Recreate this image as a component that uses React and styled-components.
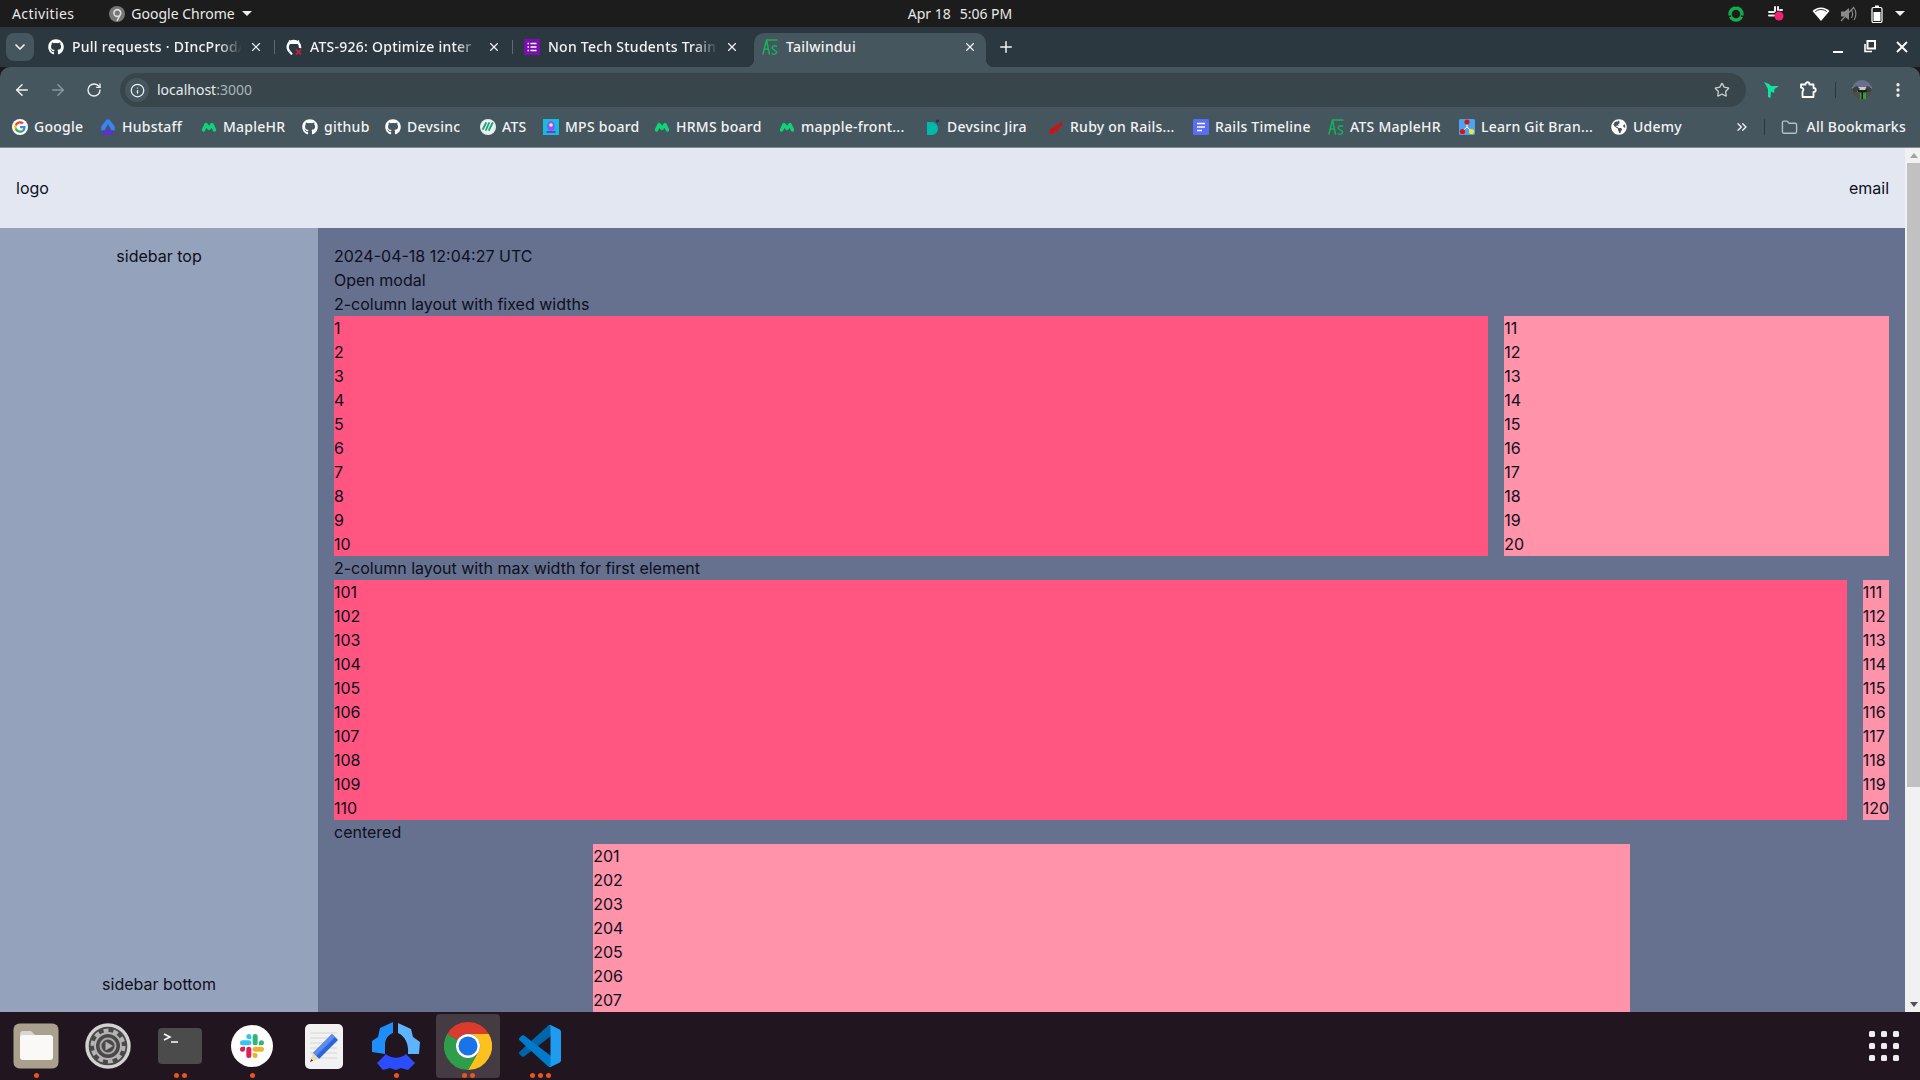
import React from "react";
import styled, { createGlobalStyle } from "styled-components";
import { FaGithub, FaGlobeAmericas } from "react-icons/fa";
import { ArrowLeft, ArrowRight, RotateCw, Info, Star, EllipsisVertical, X, Plus, ChevronDown, ChevronsRight, Folder } from "lucide-react";

const Global = createGlobalStyle`
  html, body { margin: 0; padding: 0; background: #211520; overflow: hidden; }
  * { box-sizing: border-box; }
`;
const UI = `"Noto Sans", "Open Sans", sans-serif`;

const Screen = styled.div`width:1920px;height:1080px;display:flex;flex-direction:column;overflow:hidden;font-family:${UI};`;
const TopBar = styled.div`height:27px;background:#1c1c1c;color:#e9e9e9;display:grid;grid-template-columns:1fr auto 1fr;align-items:center;font-size:14px;`;
const TopLeft = styled.div`display:flex;align-items:center;padding-left:12px;`;
const Activities = styled.span`letter-spacing:.4px;`;
const AppMenu = styled.div`display:flex;align-items:center;margin-left:35px;gap:6px;`;
const Caret = styled.span`width:0;height:0;border-left:5px solid transparent;border-right:5px solid transparent;border-top:5px solid #eee;margin-left:${p=>p.$ml||0}px;`;
const Clock = styled.div`display:flex;gap:9px;font-size:14px;`;
const Tray = styled.div`display:flex;align-items:center;justify-content:flex-end;padding-right:11px;`;
const TraySlot = styled.div`width:18px;height:18px;display:flex;align-items:center;justify-content:center;margin-left:${p=>p.$ml}px;`;

const TabStrip = styled.div`height:40px;background:#2c383f;display:flex;align-items:flex-end;padding-left:6px;color:#f1f3f4;`;
const TabSearch = styled.div`width:28px;height:28px;border-radius:8px;background:#45565f;display:flex;align-items:center;justify-content:center;margin:0 3px 6px 0;`;
const Tab = styled.div`position:relative;height:34px;width:${p=>p.$active?232:238}px;margin:${p=>p.$active?"0 3px":"0"};padding:0 0 6px ${p=>p.$active?8:11}px;display:flex;align-items:center;font-size:14px;letter-spacing:.25px;font-weight:500;
  background:${p=>p.$active?"#45565f":"transparent"};border-radius:10px 10px 0 0;
  ${p=>p.$active?`
    &::before,&::after{content:"";position:absolute;bottom:0;width:8px;height:8px;}
    &::before{left:-8px;background:radial-gradient(circle at 0 0,transparent 8px,#45565f 8.5px);}
    &::after{right:-8px;background:radial-gradient(circle at 100% 0,transparent 8px,#45565f 8.5px);}
  `:""}
  ${p=>p.$sep?`&::after{content:"";position:absolute;right:0;top:7px;height:14px;width:1px;background:#5d6b73;}`:""}
`;
const TabIcon = styled.div`width:16px;height:16px;flex:none;display:flex;margin-right:8px;`;
const TabTitle = styled.div`width:${p=>p.$active?168:170}px;flex:none;white-space:nowrap;margin-top:-2px;${p=>p.$fade?`mask-image:linear-gradient(90deg,#000 86%,transparent 100%);`:""}`;
const TabClose = styled.div`width:16px;height:16px;display:flex;align-items:center;justify-content:center;margin-left:${p=>p.$active?8:6}px;`;
const NewTab = styled.div`width:20px;height:20px;margin:0 0 10px 7px;display:flex;align-items:center;justify-content:center;`;
const WindowControls = styled.div`margin-left:auto;height:40px;display:flex;align-items:center;padding-right:12px;gap:20px;align-self:flex-start;`;

const Toolbar = styled.div`height:40px;background:#45565f;border-radius:10px 10px 0 0;display:flex;align-items:flex-end;padding:0 4px;color:#eef1f3;`;
const NavButton = styled.div`width:36px;height:34px;display:flex;align-items:center;justify-content:center;flex:none;`;
const Omnibox = styled.div`width:1626px;height:34px;margin-left:8px;background:#38464c;border-radius:17px;display:flex;align-items:center;padding:0 16px 0 5px;font-size:14px;`;
const InfoChip = styled.div`width:24px;height:24px;border-radius:50%;background:#45565f;display:flex;align-items:center;justify-content:center;margin-right:8px;`;
const UrlText = styled.div`margin-top:-2px;`;
const Host = styled.span`color:#e6eaec;`;
const Port = styled.span`color:#aab4b9;`;
const StarSlot = styled.div`margin-left:auto;display:flex;`;
const ToolSep = styled.div`width:1px;height:16px;background:#2c383f;margin:0 8px 9px 9px;flex:none;`;
const ToolGroup = styled.div`display:flex;align-items:flex-end;margin-left:8px;`;

const BookmarkBar = styled.div`height:41px;background:#45565f;border-bottom:1px solid #7f8c94;display:flex;align-items:center;padding:0 14px 0 12px;color:#f1f3f4;font-size:14px;letter-spacing:.25px;font-weight:500;`;
const Bookmark = styled.div`width:${p=>p.$w}px;display:flex;align-items:center;gap:6px;white-space:nowrap;flex:none;`;
const BmIcon = styled.div`width:16px;height:16px;flex:none;display:flex;`;
const BmLabel = styled.span`margin-top:-2px;`;
const BmEnd = styled.div`margin-left:auto;display:flex;align-items:center;`;
const BmSep = styled.div`width:1px;height:16px;background:#2c383f;margin:0 16px 0 14px;`;
const FolderSlot = styled.div`display:flex;margin-right:8px;`;

const Viewport = styled.div`flex:1;min-height:0;display:flex;font-family:Inter,sans-serif;font-size:16px;line-height:24px;color:#0d0f1c;`;
const Page = styled.div`flex:1;min-width:0;display:flex;flex-direction:column;`;
const Header = styled.header`height:80px;flex:none;background:#e3e7f1;display:flex;align-items:center;justify-content:space-between;padding:0 16px;`;
const Body = styled.div`flex:1;min-height:0;display:flex;`;
const Sidebar = styled.aside`width:318px;flex:none;background:#95a2bb;padding:16px;display:flex;flex-direction:column;justify-content:space-between;text-align:center;`;
const Main = styled.main`flex:1;min-width:0;overflow:hidden;background:#667190;padding:16px 16px 0;`;
const Row = styled.div`display:flex;gap:16px;`;
const Block = styled.div`flex:${p=>p.$flex};background:${p=>p.$strong?"#ff5580":"#ff93aa"};`;
const Centered = styled.div`width:66.6667%;margin:0 auto;background:#ff93aa;`;
const Scrollbar = styled.div`width:15px;flex:none;background:#f1f1f1;display:flex;flex-direction:column;align-items:flex-end;`;
const ScrollArrow = styled.div`width:13px;height:15px;display:flex;align-items:center;justify-content:center;flex:none;`;
const ScrollTriangle = styled.span`width:0;height:0;border-left:4px solid transparent;border-right:4px solid transparent;${p=>p.$up?"border-bottom:5px solid #a3a3a3;":"border-top:5px solid #505050;"}`;
const ScrollThumb = styled.div`width:13px;height:624px;background:#c1c1c1;flex:none;`;
const ScrollSpace = styled.div`flex:1;`;

const Dock = styled.div`height:68px;flex:none;background:#211520;display:flex;align-items:stretch;`;
const DockSlot = styled.div`position:relative;width:72px;display:flex;align-items:center;justify-content:center;`;
const DockHighlight = styled.div`position:absolute;inset:2px 4px;background:#453b43;border-radius:4px;`;
const DockDots = styled.div`position:absolute;left:0;right:0;bottom:2px;display:flex;justify-content:center;gap:3px;`;
const DockDot = styled.span`width:5px;height:5px;border-radius:50%;background:#e95420;`;
const DockIconWrap = styled.div`position:relative;display:flex;`;
const AppGrid = styled.div`margin-left:auto;margin-right:21px;align-self:center;display:grid;grid-template-columns:repeat(3,6px);gap:6px;`;
const AppGridDot = styled.span`width:6px;height:6px;border-radius:1.5px;background:#eeeeee;`;

const GoogleG = () => (
  <svg width="16" height="16" viewBox="-9 -9 66 66"><circle cx="24" cy="24" r="33" fill="#fff"/>
    <path fill="#EA4335" d="M24 9.5c3.54 0 6.71 1.22 9.21 3.6l6.85-6.85C35.9 2.38 30.47 0 24 0 14.62 0 6.51 5.38 2.56 13.22l7.98 6.19C12.43 13.72 17.74 9.5 24 9.5z"/>
    <path fill="#4285F4" d="M46.98 24.55c0-1.57-.15-3.09-.38-4.55H24v9.02h12.94c-.58 2.96-2.26 5.48-4.78 7.18l7.73 6c4.51-4.18 7.09-10.36 7.09-17.65z"/>
    <path fill="#FBBC05" d="M10.53 28.59c-.48-1.45-.76-2.99-.76-4.59s.27-3.14.76-4.59l-7.98-6.19C.92 16.46 0 20.12 0 24c0 3.88.92 7.54 2.56 10.78l7.97-6.19z"/>
    <path fill="#34A853" d="M24 48c6.48 0 11.93-2.13 15.89-5.81l-7.73-6c-2.15 1.45-4.92 2.3-8.16 2.3-6.26 0-11.57-4.22-13.47-9.91l-7.98 6.19C6.51 42.62 14.62 48 24 48z"/>
  </svg>
);
const HubstaffSmall = () => (
  <svg width="16" height="16" viewBox="0 0 16 16">
    <path d="M6.5 0.5 H9.5 L15 8 L14.5 11.5 H11.5 L8 5 L4.5 11.5 H1.5 L1 8 Z" fill="#3b82f6"/>
    <path d="M2.5 11.5 H13.5 L12 15.5 H4 Z" fill="#5b2bf0"/>
  </svg>
);
const MapleM = () => (
  <svg width="16" height="16" viewBox="0 0 16 16"><path d="M2.5 11 L5 5.5 L8 9.5 L11 5.5 L13.5 11" fill="none" stroke="#0dd476" strokeWidth="3.4" strokeLinejoin="round" strokeLinecap="round"/></svg>
);
const AtsRound = () => (
  <svg width="16" height="16" viewBox="0 0 16 16"><circle cx="8" cy="8" r="8" fill="#e8f0ee"/>
    <path d="M3 10 L6 4 M6 11 L9 4 M9 11 L12.5 4" stroke="#16a37c" strokeWidth="1.8" strokeLinecap="round"/></svg>
);
const MpsBoard = () => (
  <svg width="16" height="16" viewBox="0 0 16 16"><rect width="16" height="16" fill="#12bde0"/>
    <ellipse cx="8" cy="7" rx="4" ry="5" fill="#8f5ae8"/><circle cx="8" cy="6" r="1.8" fill="#cfe9ff"/><rect x="3.5" y="12" width="9" height="2" fill="#6b3fd0"/></svg>
);
const JiraD = () => (
  <svg width="16" height="16" viewBox="0 0 16 16"><path d="M2 3 H7 A6 6.5 0 0 1 7 16 H2 Z" fill="#00b8a9"/><circle cx="12.5" cy="2" r="1.6" fill="#123a5a"/></svg>
);
const RubySplash = () => (
  <svg width="16" height="16" viewBox="0 0 16 16"><path d="M1 15 C2 9 6 8 8 6 L10 6.5 L12 3 L13 4.5 L15 1 L13.5 7 L11.5 7.5 L12 10 L9.5 9.5 L9.5 14 L7.5 11 L5 15 Z" fill="#d40f0f"/></svg>
);
const ListDoc = ({ bg }) => (
  <svg width="16" height="16" viewBox="0 0 16 16"><rect width="16" height="16" rx="1.5" fill={bg}/>
    <path d="M4 4.5 H12 M4 8 H12 M4 11.5 H9" stroke="#fff" strokeWidth="1.7"/></svg>
);
const PurpleList = () => (
  <svg width="16" height="16" viewBox="0 0 16 16"><rect width="16" height="16" fill="#7a0fb0"/>
    <path d="M3.5 4.5 H5 M6.5 4.5 H12.5 M3.5 8 H5 M6.5 8 H12.5 M3.5 11.5 H5 M6.5 11.5 H12.5" stroke="#fff" strokeWidth="1.6"/></svg>
);
const AsLogo = () => (
  <svg width="16" height="16" viewBox="0 0 16 16" fill="none" stroke="#14b45a" strokeWidth="1.5">
    <path d="M0.8 15.5 L4.5 1 H15.5 M4.5 1 L7.5 15.5 M2.5 10 H6.5"/>
    <path d="M15 7.5 C12 6 9.5 7.5 10.5 9.5 C11.5 11.5 15 11 14.5 13.5 C14 15.5 11 15.5 9.5 14.5"/>
  </svg>
);
const GitNodes = () => (
  <svg width="16" height="16" viewBox="0 0 16 16"><rect width="16" height="16" rx="1.5" fill="#4aa5ee"/>
    <path d="M8 4 V8 M8 8 L3.5 12 M8 8 L12.5 12" stroke="#fff" strokeWidth="1"/>
    <circle cx="8" cy="3" r="2.6" fill="#e01010"/><circle cx="3.5" cy="12.5" r="2.6" fill="#e01010"/><circle cx="12.5" cy="12.5" r="2.6" fill="#f4e332"/></svg>
);
const GithubBadged = () => (
  <svg width="16" height="16" viewBox="0 0 16 16">
    <path d="M3 1 L6 2.5 H10 L13 1 L13.5 5 L10 5 L6 5 L2.5 5 Z" fill="#fff"/>
    <path d="M3.5 12.5 A6.2 6.2 0 1 1 14 9" fill="none" stroke="#fff" strokeWidth="2.4"/>
    <path d="M3.5 12.5 L6 15.5" stroke="#fff" strokeWidth="2"/>
    <path d="M10 10.5 L15 15.5 M15 10.5 L10 15.5" stroke="#e6173d" strokeWidth="1.4"/>
  </svg>
);
const ChromeMono = () => (
  <svg width="16" height="16" viewBox="0 0 16 16"><circle cx="8" cy="8" r="8" fill="#777"/><circle cx="8.3" cy="7" r="3.4" fill="none" stroke="#ddd" strokeWidth="1.6"/><path d="M11 9 L8 15" stroke="#ddd" strokeWidth="1.6"/></svg>
);
const GreenRing = () => (
  <svg width="18" height="18" viewBox="0 0 18 18"><circle cx="9" cy="9" r="6" fill="none" stroke="#0eb04c" strokeWidth="3.4"/>
    <path d="M0 12 L4 11 M18 12 L14 11 M9 0 V2" stroke="#1c1c1c" strokeWidth="1.4"/></svg>
);
const SlackTray = () => (
  <svg width="18" height="18" viewBox="0 0 18 18">
    <path d="M2 7 H7 M2 10.5 H7 M8 2 V6 M11 2 V5 M13 5 H15" stroke="#eee" strokeWidth="2" strokeLinecap="round"/>
    <circle cx="12" cy="11" r="4.5" fill="#f0246e"/>
  </svg>
);
const Wifi = () => <svg width="18" height="18" viewBox="0 0 18 18"><path d="M0.5 6 A12 12 0 0 1 17.5 6 L9 16 Z" fill="#fff"/><path d="M3.2 6.6 A9 9 0 0 1 14.8 6.6" stroke="#1c1c1c" strokeWidth="0.9" fill="none"/></svg>;
const Mute = () => <svg width="18" height="18" viewBox="0 0 18 18"><path d="M1 6.5 H4.5 L9 3 V15 L4.5 11.5 H1 Z" fill="#8a8a8a"/><path d="M11.5 5 C13 7 13 11 11.5 13 M14 3 C16.5 6.5 16.5 11.5 14 15 M1 16 L14 2" stroke="#8a8a8a" strokeWidth="1.2" fill="none"/></svg>;
const Battery = () => <svg width="12" height="18" viewBox="0 0 12 18"><rect x="1" y="2.5" width="10" height="15" rx="1.5" fill="none" stroke="#fff" strokeWidth="1.2"/><rect x="4" y="0.5" width="4" height="2" fill="#fff"/><rect x="2.5" y="7" width="7" height="9" fill="#fff"/></svg>;
const Minimize = () => <svg width="12" height="14" viewBox="0 0 12 14"><rect x="1" y="11" width="10" height="2" fill="#fff"/></svg>;
const Restore = () => <svg width="12" height="14" viewBox="0 0 12 14"><path d="M3.5 1 H11 V8.5 H3.5 Z" fill="none" stroke="#fff" strokeWidth="2"/><path d="M1 4 V11.5 H8" fill="none" stroke="#fff" strokeWidth="1.6"/></svg>;
const CloseWin = () => <svg width="12" height="12" viewBox="0 0 12 12"><path d="M1 1 L11 11 M11 1 L1 11" stroke="#fff" strokeWidth="1.8"/></svg>;
const ExtBird = () => <svg width="18" height="18" viewBox="0 0 18 18"><path d="M1 1 L6 3 L8 5 L16 5 L11.5 8 L11 12 L8 10.5 L7.5 17 L5 16 L5 8 Z" fill="#12e3a5"/></svg>;
const PuzzlePiece = () => (
  <svg width="20" height="20" viewBox="0 0 20 20" fill="none" stroke="#fff" strokeWidth="1.8" strokeLinejoin="round">
    <path d="M3 4.5 H7.5 C7.5 1.5 11.5 1.5 11.5 4.5 H15.5 V8 C18.5 8 18.5 12 15.5 12 V17 H4.5 V11.5 C6.5 10 5 7.5 3 7.5 Z"/>
  </svg>
);
const AvatarPhoto = () => (
  <svg width="20" height="20" viewBox="0 0 20 20">
    <defs><clipPath id="avatarClip"><circle cx="10" cy="10" r="10"/></clipPath></defs>
    <g clipPath="url(#avatarClip)">
      <rect width="20" height="20" fill="#6a6f90"/>
      <rect y="7" width="20" height="5" fill="#c9cbc6"/>
      <path d="M0 8 L5 6 L8 9 L4 13 L0 13 Z M20 8 L15 6 L13 10 L16 13 L20 13 Z" fill="#3a403a"/>
      <rect y="12" width="20" height="8" fill="#4a4f4a"/>
      <rect x="6" y="10" width="9" height="2" fill="#1c1f1c"/>
      <rect x="8" y="13" width="6" height="6" fill="#3a9a3a"/>
      <rect x="9.5" y="11" width="1.5" height="8" fill="#151515"/>
    </g>
  </svg>
);

const Files = () => (
  <svg width="46" height="46" viewBox="0 0 46 46"><rect x="0.5" y="0.5" width="45" height="45" rx="6" fill="#a9a18d"/>
    <path d="M7 11 a3 3 0 0 1 3-3 H18 L22 12 H36 a3 3 0 0 1 3 3 V33 a3 3 0 0 1-3 3 H10 a3 3 0 0 1-3-3 Z" fill="#d9d6cf"/>
    <rect x="7" y="12" width="33" height="25" rx="3" fill="#faf9f7"/></svg>
);
const SettingsApp = () => (
  <svg width="46" height="46" viewBox="0 0 46 46" fill="none">
    <circle cx="23" cy="23" r="21" fill="#4a4849" stroke="#d2d2d2" strokeWidth="3.4"/>
    <circle cx="23" cy="23" r="15.5" stroke="#b4b4b4" strokeWidth="4" strokeDasharray="4.87 4.87"/>
    <circle cx="23" cy="23" r="13" stroke="#b4b4b4" strokeWidth="2"/>
    <circle cx="23" cy="23" r="7.5" stroke="#a8a8a8" strokeWidth="2"/>
    <path d="M20.5 18.5 L28 23 L20.5 27.5 Z" fill="#b4b4b4"/>
  </svg>
);
const TerminalApp = () => (
  <svg width="44" height="36" viewBox="0 0 44 36"><rect width="44" height="36" rx="4" fill="#4b4b4b"/>
    <path d="M6 6 L12 9 L6 12 M13 14 H20" stroke="#fff" strokeWidth="1.5" fill="none"/></svg>
);
const SlackApp = () => (
  <svg width="42" height="42" viewBox="-9 -9 42 42"><circle cx="12" cy="12" r="21" fill="#fff"/>
    <path fill="#E01E5A" d="M5.042 15.165a2.528 2.528 0 0 1-2.52 2.523A2.528 2.528 0 0 1 0 15.165a2.527 2.527 0 0 1 2.522-2.52h2.52v2.52zM6.313 15.165a2.527 2.527 0 0 1 2.521-2.52 2.527 2.527 0 0 1 2.521 2.52v6.313A2.528 2.528 0 0 1 8.834 24a2.528 2.528 0 0 1-2.521-2.522v-6.313z"/>
    <path fill="#36C5F0" d="M8.834 5.042a2.528 2.528 0 0 1-2.521-2.52A2.528 2.528 0 0 1 8.834 0a2.528 2.528 0 0 1 2.521 2.522v2.52H8.834zM8.834 6.313a2.528 2.528 0 0 1 2.521 2.521 2.528 2.528 0 0 1-2.521 2.521H2.522A2.528 2.528 0 0 1 0 8.834a2.528 2.528 0 0 1 2.522-2.521h6.312z"/>
    <path fill="#2EB67D" d="M18.956 8.834a2.528 2.528 0 0 1 2.522-2.521A2.528 2.528 0 0 1 24 8.834a2.528 2.528 0 0 1-2.522 2.521h-2.522V8.834zM17.688 8.834a2.528 2.528 0 0 1-2.523 2.521 2.527 2.527 0 0 1-2.52-2.521V2.522A2.527 2.527 0 0 1 15.165 0a2.528 2.528 0 0 1 2.523 2.522v6.312z"/>
    <path fill="#ECB22E" d="M15.165 18.956a2.528 2.528 0 0 1 2.523 2.522A2.528 2.528 0 0 1 15.165 24a2.527 2.527 0 0 1-2.52-2.522v-2.522h2.52zM15.165 17.688a2.527 2.527 0 0 1-2.52-2.523 2.526 2.526 0 0 1 2.52-2.52h6.313A2.527 2.527 0 0 1 24 15.165a2.528 2.528 0 0 1-2.522 2.523h-6.313z"/>
  </svg>
);
const GeditApp = () => (
  <svg width="38" height="45" viewBox="0 0 38 45"><rect width="38" height="45" rx="5" fill="#f2f2f2"/>
    <path d="M5 9 H32 M5 14 H32 M5 19 H32 M5 24 H32 M5 29 H32 M5 34 H32" stroke="#cfcfcf" strokeWidth="0.8"/>
    <path d="M27 10 L33 16 L14 35 L8 29 Z" fill="#2f63d8"/><path d="M27 10 L30 13 L11 32 L8 29 Z" fill="#5b8cf0"/>
    <path d="M8 29 L14 35 L5 38 Z" fill="#eed9b8"/><path d="M6.5 35 L8 36.8 L5 38 Z" fill="#333"/>
  </svg>
);
const HubApp = () => (
  <svg width="48" height="48" viewBox="0 0 48 48">
    <path d="M21 0 L21 11 C16 13 13 17 13 23 L13 32 L0 30 L0 19 L6 15 L8 6 Z" fill="#1f8dfa"/>
    <path d="M26 1 L39 7 L41 15 L48 20 L47 32 L36 32 C37 22 33 14 26 11 Z" fill="#5fb4ff"/>
    <path d="M14 32 C19 37 29 37 34 32 L43 41 L36 48 L29 46 L24 48 L18 46 L11 48 L5 41 Z" fill="#2c4cff"/>
  </svg>
);
const ChromeApp = () => (
  <svg width="48" height="48" viewBox="0 0 48 48">
    <path d="M24 0 A24 24 0 0 1 44.8 12 L24 12 A12 12 0 0 0 13.6 18 L3.2 12 A24 24 0 0 1 24 0 Z" fill="#db3a2e"/>
    <path d="M44.8 12 A24 24 0 0 1 24 48 L34.4 30 A12 12 0 0 0 24 12 Z" fill="#fcc11c"/>
    <path d="M3.2 12 A24 24 0 0 0 24 48 L34.4 30 A12 12 0 0 1 13.6 18 Z" fill="#2f9e4b"/>
    <circle cx="24" cy="24" r="12" fill="#fff"/><circle cx="24" cy="24" r="9.5" fill="#1a73e8"/>
  </svg>
);
const VsCode = () => (
  <svg width="42" height="42" viewBox="0 0 100 100">
    <path fill="#0065A9" d="M96.4614 10.7962L75.8569 0.875542C73.4719 -0.272773 70.6217 0.211611 68.75 2.08333L1.29858 63.5832C-0.515693 65.2373 -0.513607 68.0937 1.30308 69.7452L6.81272 74.754C8.29793 76.1042 10.5347 76.2036 12.1338 74.9905L93.3609 13.3699C96.086 11.3026 100 13.2462 100 16.6667V16.4275C100 14.0265 98.6246 11.8378 96.4614 10.7962Z"/>
    <path fill="#007ACC" d="M96.4614 89.2038L75.8569 99.1245C73.4719 100.273 70.6217 99.7884 68.75 97.9167L1.29858 36.4169C-0.515693 34.7627 -0.513607 31.9063 1.30308 30.2548L6.81272 25.246C8.29793 23.8958 10.5347 23.7964 12.1338 25.0095L93.3609 86.6301C96.086 88.6974 100 86.7538 100 83.3333V83.5725C100 85.9735 98.6246 88.1622 96.4614 89.2038Z"/>
    <path fill="#1F9CF0" d="M75.8578 99.1263C73.4721 100.274 70.6219 99.7885 68.75 97.9166C71.0564 100.223 75 98.5895 75 95.3278V4.67213C75 1.41039 71.0564 -0.223106 68.75 2.08329C70.6219 0.211402 73.4721 -0.273666 75.8578 0.873633L96.4587 10.7807C98.6234 11.8217 100 14.0112 100 16.4132V83.5871C100 85.9891 98.6234 88.1786 96.4586 89.2196L75.8578 99.1263Z"/>
  </svg>
);

const gh = <FaGithub size={16} color="#fff" />;
const tabs = [
  { title: "Pull requests · DIncProd/", icon: gh, sep: true, fade: true },
  { title: "ATS-926: Optimize inter", icon: <GithubBadged />, sep: true, fade: true },
  { title: "Non Tech Students Train", icon: <PurpleList />, fade: true },
  { title: "Tailwindui", icon: <AsLogo />, active: true },
];
const bookmarks = [
  ["Google", <GoogleG />, 88], ["Hubstaff", <HubstaffSmall />, 101], ["MapleHR", <MapleM />, 101],
  ["github", gh, 83], ["Devsinc", gh, 95], ["ATS", <AtsRound />, 63], ["MPS board", <MpsBoard />, 111],
  ["HRMS board", <MapleM />, 125], ["mapple-front...", <MapleM />, 146], ["Devsinc Jira", <JiraD />, 123],
  ["Ruby on Rails...", <RubySplash />, 145], ["Rails Timeline", <ListDoc bg="#5b6cf5" />, 135],
  ["ATS MapleHR", <AsLogo />, 131], ["Learn Git Bran...", <GitNodes />, 152],
  ["Udemy", <FaGlobeAmericas size={16} color="#fff" />, 90],
];
const dock = [
  [<Files />, 1], [<SettingsApp />, 0], [<TerminalApp />, 2], [<SlackApp />, 1],
  [<GeditApp />, 0], [<HubApp />, 1], [<ChromeApp />, 2, true], [<VsCode />, 3],
];
const range = (a, b) => Array.from({ length: b - a + 1 }, (_, i) => a + i);
const Lines = ({ from, to }) => range(from, to).map((n) => <div key={n}>{n}</div>);

export default function App() {
  return (
    <Screen>
      <Global />
      <TopBar>
        <TopLeft>
          <Activities>Activities</Activities>
          <AppMenu><ChromeMono /><span>Google Chrome</span><Caret $ml={1} /></AppMenu>
        </TopLeft>
        <Clock><span>Apr 18</span><span>5:06 PM</span></Clock>
        <Tray>
          <TraySlot $ml={0}><GreenRing /></TraySlot>
          <TraySlot $ml={22}><SlackTray /></TraySlot>
          <TraySlot $ml={27}><Wifi /></TraySlot>
          <TraySlot $ml={10}><Mute /></TraySlot>
          <TraySlot $ml={10}><Battery /></TraySlot>
          <TraySlot $ml={5}><Caret /></TraySlot>
        </Tray>
      </TopBar>
      <TabStrip>
        <TabSearch><ChevronDown size={16} strokeWidth={2.5} /></TabSearch>
        {tabs.map((t) => (
          <Tab key={t.title} $active={t.active} $sep={t.sep}>
            <TabIcon>{t.icon}</TabIcon>
            <TabTitle $fade={t.fade} $active={t.active}>{t.title}</TabTitle>
            <TabClose $active={t.active}><X size={14} strokeWidth={2} /></TabClose>
          </Tab>
        ))}
        <NewTab><Plus size={18} strokeWidth={2} /></NewTab>
        <WindowControls><Minimize /><Restore /><CloseWin /></WindowControls>
      </TabStrip>
      <Toolbar>
        <NavButton><ArrowLeft size={18} strokeWidth={2} /></NavButton>
        <NavButton><ArrowRight size={18} strokeWidth={2} color="#8b979e" /></NavButton>
        <NavButton><RotateCw size={16} strokeWidth={2} /></NavButton>
        <Omnibox>
          <InfoChip><Info size={15} strokeWidth={2} /></InfoChip>
          <UrlText><Host>localhost</Host><Port>:3000</Port></UrlText>
          <StarSlot><Star size={16} strokeWidth={2} color="#c6cdd1" /></StarSlot>
        </Omnibox>
        <ToolGroup>
          <NavButton><ExtBird /></NavButton>
          <NavButton><PuzzlePiece /></NavButton>
          <ToolSep />
          <NavButton><AvatarPhoto /></NavButton>
          <NavButton><EllipsisVertical size={18} strokeWidth={2.4} /></NavButton>
        </ToolGroup>
      </Toolbar>
      <BookmarkBar>
        {bookmarks.map(([label, icon, w]) => (
          <Bookmark key={label} $w={w}><BmIcon>{icon}</BmIcon><BmLabel>{label}</BmLabel></Bookmark>
        ))}
        <BmEnd>
          <ChevronsRight size={16} />
          <BmSep />
          <FolderSlot><Folder size={17} color="#b5bec3" /></FolderSlot>
          <BmLabel>All Bookmarks</BmLabel>
        </BmEnd>
      </BookmarkBar>
      <Viewport>
        <Page>
          <Header><div>logo</div><div>email</div></Header>
          <Body>
            <Sidebar><div>sidebar top</div><div>sidebar bottom</div></Sidebar>
            <Main>
              <div>2024-04-18 12:04:27 UTC</div>
              <div>Open modal</div>
              <div>2-column layout with fixed widths</div>
              <Row>
                <Block $strong $flex="3"><Lines from={1} to={10} /></Block>
                <Block $flex="1"><Lines from={11} to={20} /></Block>
              </Row>
              <div>2-column layout with max width for first element</div>
              <Row>
                <Block $strong $flex="1"><Lines from={101} to={110} /></Block>
                <Block $flex="none"><Lines from={111} to={120} /></Block>
              </Row>
              <div>centered</div>
              <Centered><Lines from={201} to={207} /></Centered>
            </Main>
          </Body>
        </Page>
        <Scrollbar>
          <ScrollArrow><ScrollTriangle $up /></ScrollArrow>
          <ScrollThumb />
          <ScrollSpace />
          <ScrollArrow><ScrollTriangle /></ScrollArrow>
        </Scrollbar>
      </Viewport>
      <Dock>
        {dock.map(([icon, dots, active], i) => (
          <DockSlot key={i}>
            {active && <DockHighlight />}
            <DockIconWrap>{icon}</DockIconWrap>
            <DockDots>{range(1, dots).map((d) => <DockDot key={d} />)}</DockDots>
          </DockSlot>
        ))}
        <AppGrid>{range(1, 9).map((n) => <AppGridDot key={n} />)}</AppGrid>
      </Dock>
    </Screen>
  );
}
